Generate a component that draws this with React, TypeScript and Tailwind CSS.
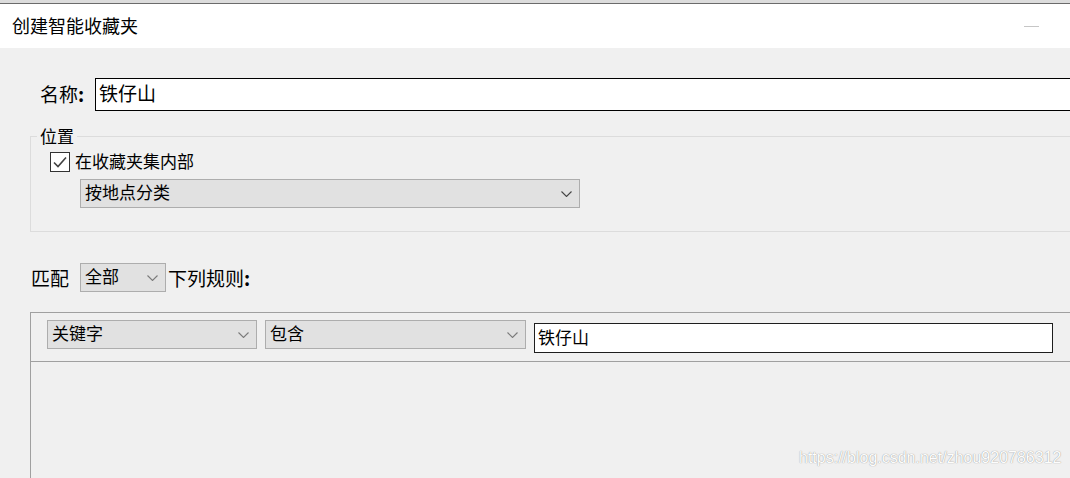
import React from "react";

function Chevron({ color = "#6b6b6b" }: { color?: string }) {
  return (
    <svg width="11" height="6" viewBox="0 0 11 6" className="shrink-0">
      <polyline points="0.5,0.5 5.5,5.5 10.5,0.5" fill="none" stroke={color} strokeWidth="1.1" />
    </svg>
  );
}

function Dropdown({ label, w, chevron }: { label: string; w: string; chevron?: string }) {
  return (
    <div
      className={`${w} h-[29px] shrink-0 flex items-center justify-between bg-[#e1e1e1] border border-[#adadad] pl-[4px] pr-[7px] text-[17px] leading-none text-black`}
    >
      <span className="pb-[4px]">{label}</span>
      <Chevron color={chevron} />
    </div>
  );
}

export default function App() {
  return (
    <div className="relative w-[1070px] h-[478px] overflow-hidden bg-[#f0f0f0] font-['Noto_Sans_CJK_SC','Noto_Sans',sans-serif] text-black">
      <div className="h-[3px] bg-[#dcdcdc]" />
      <div className="h-px bg-[#6b6b6b]" />
      <div className="h-[44px] bg-white flex items-center justify-between pl-[12px] pr-[31px]">
        <span className="text-[18px] leading-none pb-[2px]">创建智能收藏夹</span>
        <span className="w-[15px] h-px bg-[#c6c6c6]" />
      </div>

      <div className="w-[1120px] pl-[30px] pt-[30px]">
        {/* name row */}
        <div className="flex items-center ml-[10px]">
          <span className="w-[55px] text-[19px] leading-none pb-[2px]">
            名称<span className="font-bold">:</span>
          </span>
          <div className="flex-1 h-[33px] border border-black bg-white flex items-center pl-[3px] pb-[5px] text-[19px] leading-none">
            铁仔山
          </div>
        </div>

        {/* location group */}
        <fieldset className="mt-[17px] border border-[#dcdcdc] p-0 m-0">
          <legend className="ml-[6px] px-[3px] text-[17px] leading-[16px]">位置</legend>
          <div className="pl-[19px] pt-[8px] pb-[23px]">
            <div className="flex items-center h-[20px]">
              <div className="w-[20px] h-[20px] border border-[#333333] bg-white flex items-center justify-center">
                <svg width="18" height="18" viewBox="0 0 18 18">
                  <polyline points="3,9.5 7,13.5 15,4.5" fill="none" stroke="#404040" strokeWidth="1.6" />
                </svg>
              </div>
              <span className="ml-[5px] text-[17px] leading-none pb-[4px]">在收藏夹集内部</span>
            </div>
            <div className="mt-[7px] ml-[30px]">
              <Dropdown label="按地点分类" w="w-[500px]" chevron="#444444" />
            </div>
          </div>
        </fieldset>

        {/* match row */}
        <div className="mt-[31px] flex items-center h-[29px]">
          <span className="ml-[1px] w-[49px] text-[19px] leading-none">匹配</span>
          <Dropdown label="全部" w="w-[86px]" chevron="#7a7a7a" />
          <span className="ml-[2px] text-[19px] leading-none">
            下列规则<span className="font-bold">:</span>
          </span>
        </div>

        {/* rules box */}
        <div className="mt-[20px] h-[200px] border border-[#a0a0a0]">
          <div className="h-[49px] flex items-start gap-[8px] pl-[16px] pt-[7px] border-b border-[#a0a0a0]">
            <Dropdown label="关键字" w="w-[210px]" chevron="#7a7a7a" />
            <Dropdown label="包含" w="w-[261px]" chevron="#7a7a7a" />
            <div className="mt-[3px] w-[519px] h-[30px] border border-[#1e1e1e] bg-white flex items-center pl-[3px] pb-[4px] text-[17px] leading-none">
              铁仔山
            </div>
          </div>
        </div>
      </div>

      <div className="absolute left-[799px] top-[448px] font-['Liberation_Sans',sans-serif] text-[16px] leading-[20px] text-[#fdfdfd] [text-shadow:0_0_1px_rgba(0,0,0,0.5)]">
        https://blog.csdn.net/zhou920786312
      </div>
    </div>
  );
}
